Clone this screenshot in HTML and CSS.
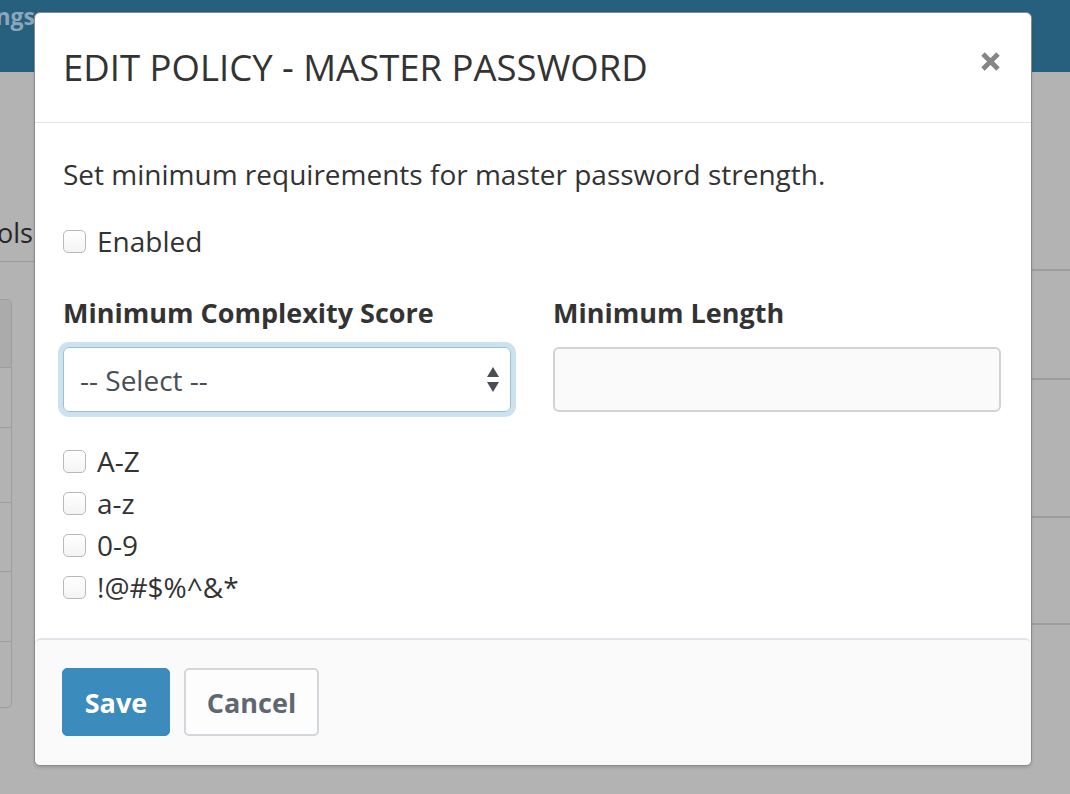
FILE: index.html
```html
<!DOCTYPE html>
<html>
<head>
<meta charset="utf-8">
<link rel="stylesheet" href="styles.css">
</head>
<body>
<div class="page">
  <div class="topbar"><div class="brand"><span>Settings</span></div></div>
  <div class="content">
    <div class="left-strip">
      <div class="tab-text"><span>Tools</span></div>
      <div class="tab-line"></div>
      <div class="card">
        <div class="card-row head"></div>
        <div class="card-row r1"></div>
        <div class="card-row r2"></div>
        <div class="card-row r3"></div>
        <div class="card-row r4"></div>
        <div class="card-row r5"></div>
      </div>
    </div>
    <div class="right-strip">
      <div class="rrow a"></div>
      <div class="rrow b"></div>
      <div class="rrow c"></div>
      <div class="rrow d"></div>
    </div>
  </div>
</div>

<div class="modal">
  <div class="modal-header">
    <h4 class="modal-title">EDIT POLICY - MASTER PASSWORD</h4>
    <button class="close" aria-label="Close">
      <svg width="21" height="21" viewBox="0 0 21 21"><path d="M3 3 L18 18 M18 3 L3 18" stroke="#858585" stroke-width="4.8" stroke-linecap="butt" fill="none"/></svg>
    </button>
  </div>
  <div class="modal-body">
    <p class="intro">Set minimum requirements for master password strength.</p>
    <label class="check enabled"><span class="box"></span>Enabled</label>
    <div class="row">
      <div class="col">
        <div class="field-label">Minimum Complexity Score</div>
        <div class="select">
          <span>-- Select --</span>
          <svg class="arrows" width="12" height="28" viewBox="0 0 12 28"><path d="M6 1 L12 11 L0 11 Z M0 16 L12 16 L6 26 Z" fill="#4a4f55"/></svg>
        </div>
      </div>
      <div class="col">
        <div class="field-label">Minimum Length</div>
        <div class="input"></div>
      </div>
    </div>
    <div class="checks">
      <label class="check"><span class="box"></span>A-Z</label>
      <label class="check"><span class="box"></span>a-z</label>
      <label class="check"><span class="box"></span>0-9</label>
      <label class="check"><span class="box"></span>!@#$%^&amp;*</label>
    </div>
  </div>
  <div class="modal-footer">
    <button class="btn btn-primary">Save</button>
    <button class="btn btn-default">Cancel</button>
  </div>
</div>
</body>
</html>
```
FILE: styles.css
```css
* { box-sizing: border-box; }
html, body { margin: 0; padding: 0; }
body {
  width: 1070px;
  height: 794px;
  overflow: hidden;
  background: #b3b3b3;
  font-family: "Open Sans", "Liberation Sans", sans-serif;
  color: #333;
  position: relative;
}
.page { width: 1070px; height: 794px; }
.topbar {
  height: 72px;
  background: #27607f;
  overflow: hidden;
}
.brand {
  width: 34px;
  display: flex;
  justify-content: flex-end;
  overflow: hidden;
  font-weight: 700;
  font-size: 23px;
  color: #8ca7ba;
  line-height: 30px;
  white-space: nowrap;
  padding-top: 1px;
}
.brand span { flex: none; margin-right: -1px; }
.content { display: flex; justify-content: space-between; }
.left-strip { width: 34px; overflow: hidden; }
.tab-text {
  width: 33px;
  display: flex;
  justify-content: flex-end;
  overflow: hidden;
  font-size: 27px;
  color: #262626;
  margin-top: 146px;
  line-height: 30px;
  white-space: nowrap;
}
.tab-text span { flex: none; }
.tab-line { height: 1px; background: #9b9b9b; margin-top: 13px; }
.card {
  margin-top: 37px;
  width: 12px;
  border: 1px solid #9d9d9d;
  border-left: none;
  border-radius: 0 5px 5px 0;
}
.card-row { border-top: 1px solid #9d9d9d; }
.card-row.head { border-top: none; height: 67px; background: #ababab; }
.card-row.r1 { height: 60px; }
.card-row.r2 { height: 75px; }
.card-row.r3 { height: 69px; }
.card-row.r4 { height: 70px; }
.card-row.r5 { height: 66px; }
.right-strip { width: 39px; }
.rrow { border-bottom: 2px solid #9d9d9d; }
.rrow.a { height: 199px; }
.rrow.b { height: 109px; }
.rrow.c { height: 138px; }
.rrow.d { height: 107px; }

.modal {
  position: absolute;
  left: 34px;
  top: 12px;
  width: 998px;
  height: 754px;
  background: #fff;
  border: 1px solid #8a8a8a;
  border-radius: 6px;
  box-shadow: 0 2px 3px rgba(0,0,0,0.12);
  display: flex;
  flex-direction: column;
}
.modal-header {
  height: 110px;
  flex: none;
  border-bottom: 1px solid #e2e4e7;
  display: flex;
  align-items: center;
  justify-content: space-between;
  padding: 0 30px 0 28px;
}
.modal-title {
  margin: -2px 0 0 0;
  font-weight: 400;
  font-size: 36.5px;
  line-height: 44px;
  color: #333;
}
.close {
  border: none;
  background: none;
  padding: 0;
  margin-top: -12px;
  width: 21px;
  height: 21px;
  display: block;
}
.close svg { display: block; }
.modal-body {
  flex: 1;
  padding: 31px 29px 0 28px;
}
.intro {
  margin: 0;
  font-size: 28px;
  line-height: 40px;
}
.check {
  display: flex;
  align-items: center;
  font-size: 28px;
  line-height: 42px;
  color: #333;
}
.check .box {
  width: 23px;
  height: 23px;
  border: 1px solid #b9b9b9;
  border-radius: 5px;
  background: linear-gradient(#ffffff, #f4f4f4);
  margin-right: 11px;
  flex: none;
}
.enabled { margin-top: 26px; }
.row {
  display: flex;
  gap: 42px;
  margin-top: 31px;
}
.col { width: 448px; }
.field-label {
  font-weight: 700;
  font-size: 27px;
  line-height: 40px;
  margin-bottom: 14px;
}
.select {
  height: 65px;
  border: 1px solid #94c1dc;
  border-radius: 6px;
  box-shadow: 0 0 0 5px #cde2ee;
  display: flex;
  align-items: center;
  justify-content: space-between;
  padding: 0 11px 0 16px;
  font-size: 28px;
  color: #4a4f55;
}
.input {
  height: 65px;
  border: 2px solid #d0d4d8;
  border-radius: 6px;
  background: #fafafa;
}
.checks { margin-top: 28px; display: flex; flex-direction: column; }

.modal-footer {
  height: 127px;
  flex: none;
  background: #fafafa;
  border-top: 2px solid #e1e4e8;
  border-radius: 6px;
  padding: 28px 0 0 27px;
  display: flex;
  gap: 14px;
  align-items: flex-start;
}
.btn {
  height: 68px;
  font-family: "Open Sans", "Liberation Sans", sans-serif;
  font-weight: 700;
  font-size: 27px;
  border-radius: 5px;
  padding: 0 20px;
}
.btn-primary {
  background: #3b8cbc;
  color: #fff;
  border: 1px solid #3b8cbc;
  width: 108px;
}
.btn-default {
  background: #fdfdfd;
  color: #5f6770;
  border: 2px solid #d3d7db;
  width: 135px;
}
```
